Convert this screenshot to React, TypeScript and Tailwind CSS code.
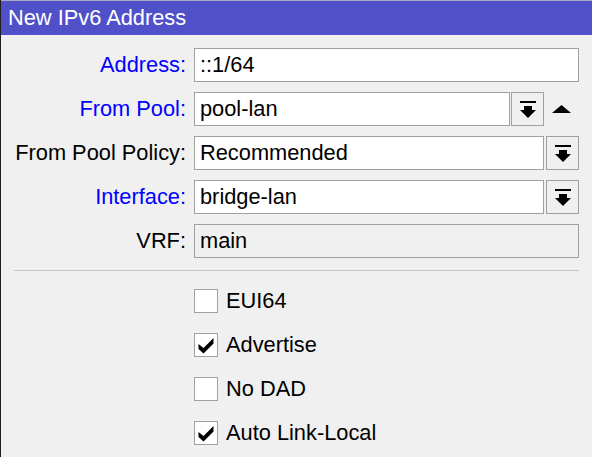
import React from "react";

const DropIcon = () => (
  <svg width="16" height="17" viewBox="0 0 16 17" fill="#000">
    <rect x="0" y="0" width="16" height="2" />
    <rect x="4" y="5" width="8" height="4" />
    <polygon points="0,9 16,9 8,17" />
  </svg>
);

const DropButton = () => (
  <button className="flex h-[34px] w-[33px] shrink-0 items-center justify-center border border-[#a0a0a0] bg-[#f0f0f0]">
    <DropIcon />
  </button>
);

const Check = () => (
  <svg width="22" height="22" viewBox="0 0 22 22">
    <polygon points="3.5,10 8.5,14 18.5,4 18.5,9.5 8.5,19.5 3.5,15" fill="#000" />
  </svg>
);

interface RowProps {
  label: string;
  value: string;
  blue?: boolean;
  disabled?: boolean;
  children?: React.ReactNode;
}

const Row = ({ label, value, blue, disabled, children }: RowProps) => (
  <div className="flex h-[34px] items-center">
    <div
      className={`w-[185px] shrink-0 whitespace-nowrap text-right ${blue ? "text-[#0000ff]" : "text-black"}`}
    >
      {label}
    </div>
    <div
      className={`ml-[8px] flex h-[34px] min-w-0 flex-1 items-center border border-[#a0a0a0] px-[5px] ${disabled ? "bg-[#f0f0f0]" : "bg-white"}`}
    >
      {value}
    </div>
    {children}
  </div>
);

const CheckRow = ({ label, checked }: { label: string; checked?: boolean }) => (
  <div className="ml-[193px] flex h-[24px] items-center gap-[8px]">
    <div className="flex h-[24px] w-[24px] items-center justify-center border border-[#a0a0a0] bg-white">
      {checked && <Check />}
    </div>
    <span>{label}</span>
  </div>
);

export default function App() {
  return (
    <div
      className="h-[457px] w-[592px] overflow-hidden border-l border-[#1e1e1e] bg-[#f0f0f0] text-[21.8px] leading-none text-black"
      style={{ fontFamily: '"Liberation Sans", Arial, sans-serif' }}
    >
      <div className="flex h-[35px] items-center border-t border-[#a8a8c0] bg-[#5050c8] pl-[7px] text-white">
        New IPv6 Address
      </div>
      <div className="flex flex-col gap-[10px] pr-[13px] pt-[13px]">
        <Row label="Address:" value="::1/64" blue />
        <Row label="From Pool:" value="pool-lan" blue>
          <div className="ml-[1px]">
            <DropButton />
          </div>
          <div className="flex w-[35px] shrink-0 justify-center">
            <svg width="19" height="8" viewBox="0 0 19 8">
              <polygon points="9.5,0 19,8 0,8" fill="#000" />
            </svg>
          </div>
        </Row>
        <Row label="From Pool Policy:" value="Recommended">
          <div className="ml-[2px]">
            <DropButton />
          </div>
        </Row>
        <Row label="Interface:" value="bridge-lan" blue>
          <div className="ml-[2px]">
            <DropButton />
          </div>
        </Row>
        <Row label="VRF:" value="main" disabled />
      </div>
      <div className="ml-[13px] mr-[13px] mt-[12px] h-px bg-[#c8c8c8]" />
      <div className="mt-[18px] flex flex-col gap-[20px]">
        <CheckRow label="EUI64" />
        <CheckRow label="Advertise" checked />
        <CheckRow label="No DAD" />
        <CheckRow label="Auto Link-Local" checked />
      </div>
    </div>
  );
}
